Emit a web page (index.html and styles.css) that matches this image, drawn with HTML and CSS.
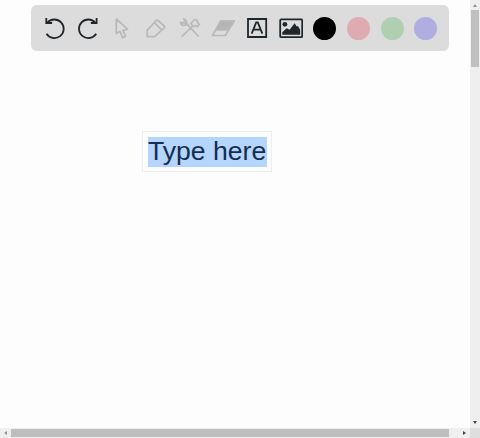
FILE: index.html
```html
<!DOCTYPE html>
<html lang="en">
<head>
<meta charset="utf-8">
<title>Whiteboard</title>
<link rel="stylesheet" href="styles.css">
</head>
<body>
<main class="board">
  <div class="toolbar">
    <svg class="icon" viewBox="0 0 24 24"><path d="M3.5 17.7A9.3 9.3 0 1 0 4.3 6.8"/><path d="M3.3 2v5h5.8"/></svg>
    <svg class="icon" viewBox="0 0 24 24"><path d="M20.2 17.7A9.3 9.3 0 1 1 19.4 6.8"/><path d="M20.6 2v5h-5.8"/></svg>
    <svg class="icon muted" viewBox="0 0 24 24"><path d="M6.3 3v14.6l3.7-2.2 2.6 6.2 2.9-1.2-2.5-6 4.5-1.2z"/></svg>
    <svg class="icon muted" viewBox="0 0 24 24"><path d="M3.2 20.6v-6.2L12.2 4.5q.9-.9 1.8 0L20.3 10q.8.9 0 1.8L10.6 20.6zM10.4 6.6l7.3 7.2"/></svg>
    <svg class="icon muted" viewBox="0 0 24 24"><path d="M5 3.2C7.4 3 9 5 8.6 7.6L20.7 20.5M7.6 9.1C5 10.2 2.4 8.7 2.5 6.2L4.6 7.3 6.4 5.4zM3.6 20.9L15 9.5M12.8 7.5L16.6 3.5 19.3 4.2V6.4L21.5 8.6 19.3 10.8 17.4 9.4 15.5 10.8z"/></svg>
    <svg class="icon muted" viewBox="0 0 24 24"><path class="fill" d="M9.8 5h13.4l-7 9H5.2z"/><path d="M9.8 5h13.5L14.2 19.5H1.4z"/></svg>
    <svg class="icon" viewBox="0 0 24 24"><path d="M3 3h18.2v18H3zM6.7 17.7L11.2 6.4h1.6L17.3 17.7M8.4 13.7h7.2"/></svg>
    <svg class="icon" viewBox="0 0 24 24"><rect x="1.2" y="3.4" width="22" height="17.8" rx="1"/><circle class="fill dot" cx="5.9" cy="8.3" r="2.4"/><path class="fill dot" d="M3.3 18.7v-2.4l4.3-4 3 1.4 5-6.4 2.2 3.1 1.2-.5 2.1 3.8v5z"/></svg>
    <span class="swatch black"></span>
    <span class="swatch red"></span>
    <span class="swatch green"></span>
    <span class="swatch blue"></span>
  </div>
  <div class="textbox"><span class="selected">Type here</span></div>
</main>
<div class="scroll vertical"><i class="arrow up"></i><span class="thumb"></span><i class="arrow down"></i></div>
<div class="scroll horizontal"><i class="arrow left"></i><span class="thumb"></span><i class="arrow right"></i></div>
<div class="corner"></div>
</body>
</html>
```
FILE: styles.css
```css
* { box-sizing: border-box; }
body {
  margin: 0;
  height: 100vh;
  overflow: hidden;
  display: grid;
  grid-template-columns: 1fr 10.5px;
  grid-template-rows: 1fr 10px;
  background: #fdfdfd;
  font-family: "Liberation Sans", Arial, sans-serif;
}
.board { position: relative; padding: 5px 0 0 31px; }
.toolbar {
  width: 418px;
  height: 46px;
  padding: 0 6px 0 6.7px;
  border-radius: 6px;
  background: #dcdcdc;
  display: grid;
  grid-template-columns: repeat(12, 33.75px);
  align-items: center;
  justify-items: center;
}
.icon {
  width: 24px;
  height: 24px;
  fill: none;
  stroke: #20272c;
  stroke-width: 1.8;
}
.muted { stroke: #b9b9b9; stroke-width: 1.7; stroke-linejoin: round; }
.fill { fill: #20272c; }
.muted .fill { fill: #b5b5b5; }
.dot { stroke: none; }
.swatch { width: 23px; height: 23px; border-radius: 50%; }
.black { background: #000; }
.red { background: #dfabb2; }
.green { background: #b0cfb1; }
.blue { background: #b0aee0; }
.textbox {
  position: absolute;
  left: 142px;
  top: 131px;
  width: 130px;
  height: 41px;
  padding: 6px 5px 0 6px;
  border: 1px solid #e9eef7;
  font-size: 26.6px;
  line-height: 28px;
  color: #142d50;
  white-space: nowrap;
}
.selected {
  display: block;
  height: 30px;
  width: 119px;
  margin: -1px 0 0 -1px;
  background: #b5d5fc;
}
.scroll { display: flex; align-items: center; background: #efefef; }
.vertical { flex-direction: column; }
.vertical .thumb { width: 8.5px; height: 56.5px; background: #c0c0c0; }
.horizontal .thumb { width: 438px; height: 8.5px; background: #bebebe; }
.arrow { flex: none; display: grid; place-items: center; width: 11px; height: 10px; }
.arrow::before { content: ""; border: 2px solid transparent; }
.up::before { border-top: 0; border-bottom: 3px solid #929292; }
.down { margin-top: auto; margin-bottom: 1px; }
.down::before { border-bottom: 0; border-top: 3px solid #444; }
.left::before { border-left: 0; border-right: 3px solid #929292; }
.right { margin-left: auto; }
.right::before { border-right: 0; border-left: 3px solid #444; }
.corner { background: #dedede; }
```
